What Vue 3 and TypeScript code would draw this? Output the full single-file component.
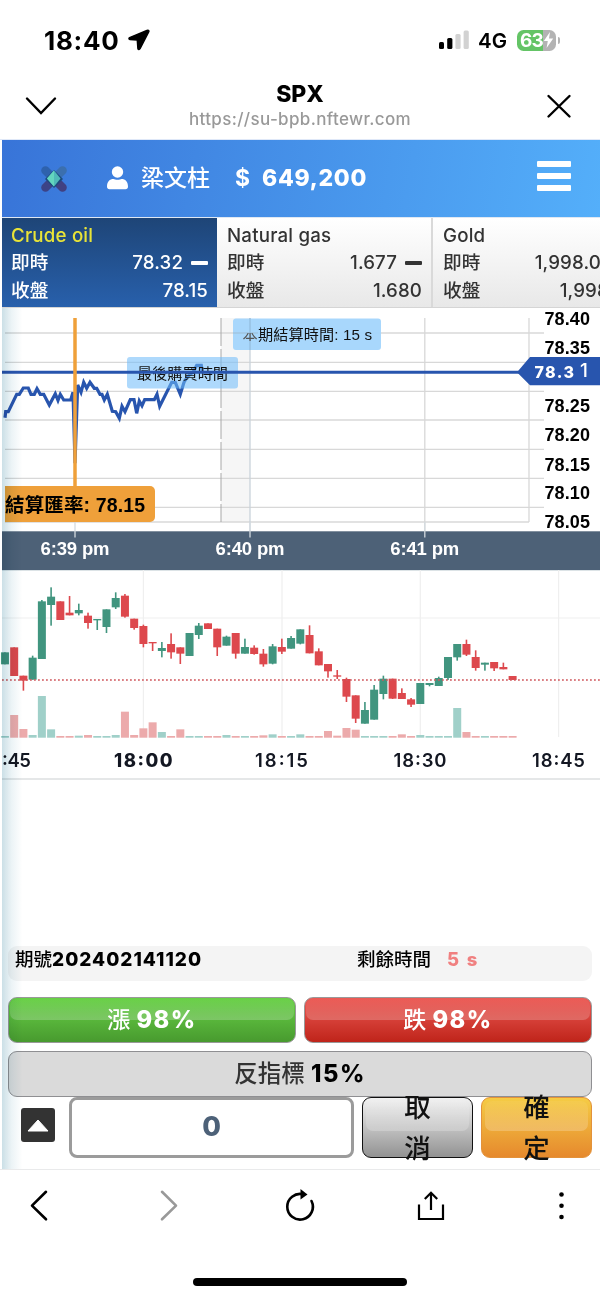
<script setup lang="ts">
type Candle = {
  x: number
  up: boolean
  top: number
  height: number
  high: number
  low: number
  volTop: number
}

// [direction, body top, body bottom, high, low, volume top], in thirds of a pixel from the pane's top
const raw: [string, number, number, number, number, number][] = [
  ['g', 247, 283, 247, 283, 498],
  ['r', 232, 318, 232, 318, 435],
  ['r', 317, 332, 317, 362, 477],
  ['g', 263, 329, 257, 329, 495],
  ['g', 94, 267, 90, 267, 378],
  ['g', 80, 105, 52, 167, 478],
  ['r', 94, 150, 94, 150, 498],
  ['r', 128, 136, 78, 136, 498],
  ['g', 120, 130, 101, 136, 497],
  ['r', 137, 159, 128, 176, 495],
  ['g', 147, 151, 147, 180, 498],
  ['g', 118, 171, 118, 189, 498],
  ['g', 84, 112, 67, 117, 495],
  ['r', 77, 140, 72, 143, 425],
  ['r', 146, 174, 146, 179, 495],
  ['r', 168, 222, 164, 232, 475],
  ['r', 216, 220, 216, 243, 457],
  ['g', 234, 243, 216, 262, 486],
  ['r', 222, 247, 190, 266, 498],
  ['r', 232, 251, 232, 282, 478],
  ['g', 189, 258, 189, 258, 498],
  ['g', 167, 195, 159, 207, 498],
  ['r', 160, 177, 160, 177, 498],
  ['r', 176, 232, 176, 258, 498],
  ['g', 200, 227, 197, 227, 495],
  ['r', 189, 251, 189, 266, 498],
  ['g', 231, 251, 206, 251, 498],
  ['r', 233, 252, 226, 254, 498],
  ['r', 251, 283, 237, 290, 496],
  ['g', 229, 281, 222, 283, 493],
  ['r', 231, 245, 206, 252, 498],
  ['g', 204, 236, 198, 236, 498],
  ['g', 178, 221, 178, 223, 493],
  ['r', 195, 250, 166, 250, 498],
  ['r', 244, 286, 235, 286, 498],
  ['r', 282, 304, 282, 323, 483],
  ['r', 316, 320, 300, 327, 497],
  ['r', 327, 380, 323, 396, 474],
  ['r', 376, 446, 376, 459, 479],
  ['g', 420, 461, 396, 461, 498],
  ['g', 359, 449, 345, 449, 498],
  ['g', 326, 372, 317, 388, 498],
  ['r', 326, 386, 326, 387, 498],
  ['r', 369, 387, 355, 387, 493],
  ['r', 388, 404, 384, 411, 498],
  ['g', 339, 402, 339, 402, 495],
  ['g', 339, 345, 339, 349, 498],
  ['g', 324, 348, 320, 348, 498],
  ['g', 261, 324, 261, 330, 498],
  ['g', 222, 262, 222, 272, 414],
  ['r', 222, 254, 209, 258, 486],
  ['r', 261, 294, 241, 302, 498],
  ['g', 278, 284, 278, 302, 498],
  ['r', 276, 295, 276, 303, 498],
  ['r', 291, 298, 278, 298, 498],
  ['r', 318, 330, 318, 330, 498],
]

const candles: Candle[] = raw.map(([dir, top, bottom, high, low, vol], i) => ({
  x: 143.4 + (i - 15) * 9.23,
  up: dir === 'g',
  top: top / 3,
  height: (bottom - top) / 3,
  high: high / 3,
  low: low / 3,
  volTop: vol / 3,
}))

const ticks: [number, number][] = [
  [15, 338], [17, 320], [25, 320], [50, 268], [58, 268], [70, 249], [85, 249], [93, 268], [103, 268],
  [111, 251], [121, 268], [131, 268], [148, 300], [166, 266], [174, 286], [181, 268], [191, 285],
  [212, 285], [219, 262], [225, 475], [233, 240], [243, 262], [251, 232], [260, 250], [270, 232],
  [283, 250], [290, 250], [300, 268], [306, 268], [313, 285], [322, 268], [337, 319], [347, 320],
  [358, 340], [366, 304], [375, 320], [391, 284], [402, 284], [410, 325], [418, 288], [426, 302],
  [434, 284], [463, 284], [471, 268], [479, 304], [515, 232], [526, 232], [541, 268], [552, 232],
  [562, 215], [580, 200], [590, 181], [604, 181], [607, 200],
]
const tickLine = ticks.map(([x, y]) => `${(x / 3).toFixed(1)},${(y / 3 - 3).toFixed(1)}`).join(' ')

const gridY = [25, 54.3, 83.3, 112, 141.3, 170.3, 199.3]
const priceLabels = [
  { text: '78.40', y: 16.7 },
  { text: '78.35', y: 45.8 },
  { text: '78.25', y: 104 },
  { text: '78.20', y: 133.2 },
  { text: '78.15', y: 162.5 },
  { text: '78.10', y: 191.3 },
  { text: '78.05', y: 220.3 },
]
const minuteLabels = [
  { text: '6:39 pm', x: 75 },
  { text: '6:40 pm', x: 250 },
  { text: '6:41 pm', x: 424.8 },
]
const hourLabels = [
  { text: ':45', x: 2, w: 29, bold: false },
  { text: '18:00', x: 114, w: 58.5, bold: true },
  { text: '18:15', x: 255, w: 53, bold: false },
  { text: '18:30', x: 393.5, w: 53, bold: false },
  { text: '18:45', x: 532, w: 53, bold: false },
]

const markets = [
  { name: 'Crude oil', now: '78.32', close: '78.15', active: true },
  { name: 'Natural gas', now: '1.677', close: '1.680', active: false },
  { name: 'Gold', now: '1,998.00', close: '1,998.00', active: false },
]
</script>

<template>
  <div class="screen">
    <div class="status">
      <div class="clock">18:40</div>
      <svg class="locate" width="22" height="22" viewBox="0 0 22 22">
        <path d="M19.5 1.3 1.6 8.6c-1 .5-.8 1.8.3 1.9l7.4.5.6 8.4c.1 1.2 1.5 1.5 2 .4L20.8 2.600c.4-.9-.4-1.700-1.300-1.300z" stroke="#000" stroke-width="1.500" stroke-linejoin="round" />
      </svg>
      <svg class="signal" width="32" height="20" viewBox="0 0 32 20">
        <rect x="0" y="12" width="5" height="7" rx="1.5" />
        <rect x="8.200" y="8" width="5.200" height="11" rx="1.5" />
        <rect x="16.400" y="4" width="5.200" height="15" rx="1.5" fill="#d2d2d2" />
        <rect x="24.600" y="0.500" width="5.200" height="18.500" rx="1.5" fill="#d2d2d2" />
      </svg>
      <div class="net">4G</div>
      <div class="battery">
        <span class="level">63</span>
        <svg width="11" height="18" viewBox="0 0 11 18"><path d="M7 1 .8 10h4L3.600 17 10.200 7.500H6z" fill="#fff" /></svg>
      </div>
      <div class="nub"></div>
    </div>

    <div class="browser">
      <svg width="32" height="20" viewBox="0 0 32 20"><path d="M2 2.500 16 17 30 2.500" fill="none" stroke="#000" stroke-width="2.400" stroke-linecap="round" /></svg>
      <div class="page">
        <div class="page-title">SPX</div>
        <div class="page-url">https://su-bpb.nftewr.com</div>
      </div>
      <svg width="26" height="26" viewBox="0 0 26 26"><path d="M2.500 3 23.500 23.500M23.500 3 2.500 23.500" fill="none" stroke="#000" stroke-width="2.400" stroke-linecap="round" /></svg>
    </div>

    <div class="topbar">
      <svg class="logo" width="28" height="28" viewBox="0 0 28 28">
        <g stroke-linecap="round" stroke-width="8.500">
          <path d="M5.500 5.500 14 14" stroke="#2e62ad" />
          <path d="M22.500 5.500 14 14" stroke="#3b6fae" />
          <path d="M5.500 22.500 14 14" stroke="#3c4387" />
          <path d="M22.500 22.500 14 14" stroke="#414081" />
        </g>
        <path d="M5 14 14 5 23 14 14 23z" fill="#1b4a7d" />
        <path d="M14 5.500 20.500 13.500 14 21.500 7 13.500z" fill="#4fb9b8" />
        <path d="M14 5.500V21.500L7 13.500z" fill="#63d5be" />
      </svg>
      <svg class="user" width="21" height="24" viewBox="0 0 21 24">
        <circle cx="10.500" cy="6" r="5.700" fill="#fff" />
        <path d="M0 20.500c0-5 2.700-7.500 6.500-7.500 1.500.9 6.500.9 8 0 3.800 0 6.500 2.500 6.500 7.500 0 1.800-1 2.700-2.500 2.700h-16C1 23.200 0 22.300 0 20.500z" fill="#fff" />
      </svg>
      <span class="name">梁文柱</span>
      <span class="dollar">$</span>
      <span class="balance">649,200</span>
      <div class="menu"><i></i><i></i><i></i></div>
    </div>

    <div class="markets">
      <div v-for="m in markets" :key="m.name" class="market" :class="{ active: m.active }">
        <div class="market-name">{{ m.name }}</div>
        <div class="row"><span class="cjk">即時</span><span class="val">{{ m.now }}<i class="dash"></i></span></div>
        <div class="row"><span class="cjk">收盤</span><span class="val">{{ m.close }}</span></div>
      </div>
    </div>

    <div class="body">
      <svg class="chart" width="600" height="262" viewBox="0 0 600 262">
        <rect x="221" y="10" width="29" height="204" fill="#f6f6f6" />
        <g stroke="#d8d8d8" stroke-width="1.300">
          <line v-for="y in gridY" :key="y" x1="5" x2="544" :y1="y" :y2="y" />
          <line x1="5" x2="529" y1="214" y2="214" />
          <line x1="529" x2="529" y1="10" y2="214" />
          <line x1="424.800" x2="424.800" y1="10" y2="224" />
          <line x1="250" x2="250" y1="10" y2="224" stroke="#c9d3da" />
        </g>
        <line x1="221" x2="221" y1="10" y2="214" stroke="#a8a8a8" stroke-dasharray="28 3" />
        <polyline :points="tickLine" fill="none" stroke="#2855ae" stroke-width="3.200" stroke-linejoin="miter" />
        <rect x="127" y="49" width="111" height="31.500" rx="3" fill="#6ebcfa" fill-opacity=".56" />
        <text x="137" y="70.500" class="tag" textLength="91">最後購買時間</text>
        <line x1="2" x2="520" y1="64.200" y2="64.200" stroke="#2855ae" stroke-width="3" />
        <rect x="233" y="10.500" width="148" height="31.500" rx="3" fill="#a3d5fc" fill-opacity=".95" />
        <line x1="233" x2="258" y1="25" y2="25" stroke="#9dbdd4" stroke-width="1" />
        <line x1="250" x2="250" y1="10" y2="42" stroke="#8fb6d6" stroke-width="1" />
        <svg x="242" y="25" width="16" height="8" viewBox="242 25 16 8"><text x="242.500" y="32" class="tag faint">本</text></svg>
        <text x="258" y="32" class="tag" textLength="114">期結算時間: 15 s</text>
        <line x1="75" x2="75" y1="10" y2="180" stroke="#efa03a" stroke-width="3.500" />
        <path d="M5 178H150a5 5 0 0 1 5 5V209a5 5 0 0 1-5 5H5z" fill="#efa03a" />
        <text x="5" y="204" class="settle" textLength="140">結算匯率: 78.15</text>
        <text v-for="p in priceLabels" :key="p.text" x="544.500" :y="p.y" class="price" textLength="45.500">{{ p.text }}</text>
        <path d="M517 64.200 530 49H600V77.300H530z" fill="#2855ae" />
        <text x="534.500" y="69.500" class="flag" textLength="39.500">78.3</text>
        <text x="580" y="69" class="flag-last">1</text>
        <rect x="2" y="223.300" width="598" height="38.700" fill="#4d6177" />
        <g stroke="#d4dbe0" stroke-width="1.300">
          <line x1="75" x2="75" y1="214" y2="229.500" />
          <line x1="250" x2="250" y1="214" y2="229.500" />
          <line x1="424.800" x2="424.800" y1="214" y2="229.500" />
        </g>
        <text v-for="t in minuteLabels" :key="t.text" :x="t.x - 34.500" y="247" class="minute" textLength="69">{{ t.text }}</text>
      </svg>

      <svg class="chart" width="600" height="210" viewBox="0 0 600 210">
        <g stroke="#efefef" stroke-width="1.200">
          <line x1="2" x2="600" y1="0.500" y2="0.500" stroke="#dce3e6" />
          <line x1="2" x2="600" y1="48" y2="48" />
          <line x1="143.400" x2="143.400" y1="0" y2="167" />
          <line x1="282" x2="282" y1="0" y2="167" />
          <line x1="420.300" x2="420.300" y1="0" y2="167" />
          <line x1="558.600" x2="558.600" y1="0" y2="167" />
        </g>
        <g v-for="c in candles" :key="c.x" :class="c.up ? 'up' : 'down'">
          <rect class="vol" :x="c.x - 4" :y="c.volTop" width="8" :height="167.700 - c.volTop" />
          <rect :x="c.x - 0.800" :y="c.high" width="1.600" :height="c.low - c.high" />
          <rect :x="c.x - 4" :y="c.top" width="8" :height="c.height" />
        </g>
        <line x1="2" x2="600" y1="110" y2="110" stroke="#d0575c" stroke-width="1.700" stroke-dasharray="1.800 2.200" />
        <text v-for="h in hourLabels" :key="h.text" :x="h.x" y="197.300" :textLength="h.w" class="hour" :class="{ bold: h.bold }">{{ h.text }}</text>
        <line x1="2" x2="600" y1="209" y2="209" stroke="#dcdfe1" stroke-width="1.500" />
      </svg>

      <div class="trade">
        <div class="period">
          <span class="issue">期號<b>202402141120</b></span>
          <span class="remain">剩餘時間</span>
          <b class="seconds">5 s</b>
        </div>
        <div class="bets">
          <div class="btn rise"><span>漲 <b>98%</b></span></div>
          <div class="btn fall"><span>跌 <b>98%</b></span></div>
        </div>
        <div class="inverse">反指標 <b>15%</b></div>
        <div class="entry">
          <div class="toggle"><svg width="22" height="13" viewBox="0 0 22 13"><path d="M11 1 21 12H1z" fill="#fff" stroke="#fff" stroke-linejoin="round" /></svg></div>
          <div class="amount">0</div>
          <div class="act cancel"><span>取<br />消</span></div>
          <div class="act confirm"><span>確<br />定</span></div>
        </div>
      </div>
      <div class="edge"></div>
    </div>

    <div class="toolbar">
      <svg width="600" height="60" viewBox="0 0 600 60" fill="none" stroke="#000" stroke-width="2.600">
        <path d="M46 21.800 32 35.600 46 49.300" stroke-linecap="round" stroke-linejoin="round" />
        <path d="M162 21.800 176 35.600 162 49.300" stroke="#999" stroke-linecap="round" stroke-linejoin="round" />
        <path d="M303 24.300A12.800 12.800 0 1 0 311.500 31" stroke-linecap="round" />
        <path d="M300.500 19 307.500 24.500 300.500 29.500z" fill="#000" stroke="none" />
        <path d="M419 34.500V49H443V34.500M431 40V23.500M424.800 29 431 22.700 437.200 29" stroke-width="2.200" />
        <g fill="#000" stroke="none"><circle cx="561.500" cy="24.500" r="2.300" /><circle cx="561.500" cy="35.700" r="2.300" /><circle cx="561.500" cy="47" r="2.300" /></g>
      </svg>
      <div class="home"></div>
    </div>
  </div>
</template>

<style>
body {
  margin: 0;
  background: #fff;
}
</style>

<style scoped>
.screen {
  width: 600px;
  height: 1298px;
  overflow: hidden;
  background: #fff;
  color: #000;
  font-family: Inter, 'Noto Sans CJK TC', sans-serif;
  display: flex;
  flex-direction: column;
}
.screen * {
  box-sizing: border-box;
}
svg {
  display: block;
  flex: none;
}
.status {
  height: 80px;
  flex: none;
  display: flex;
  align-items: center;
  padding-left: 44px;
}
.clock {
  width: 84px;
  font-size: 26px;
  font-weight: 700;
  letter-spacing: 0.700px;
}
.signal {
  margin-left: 289px;
}
.net {
  margin-left: 7px;
  width: 39px;
  font-size: 20.500px;
  font-weight: 600;
}
.battery {
  width: 39px;
  height: 21px;
  border-radius: 6.500px;
  background: linear-gradient(90deg, #64c466 66%, #b3b3b3 66%);
  display: flex;
  align-items: center;
  padding-left: 3px;
}
.level {
  width: 23px;
  color: #fff;
  font-size: 19px;
  font-weight: 700;
  letter-spacing: -0.8px;
}
.nub {
  width: 2px;
  height: 7px;
  margin-left: 1.500px;
  border-radius: 0 2px 2px 0;
  background: #b3b3b3;
}
.browser {
  height: 60px;
  flex: none;
  display: flex;
  align-items: center;
  justify-content: space-between;
  padding: 0 28px 8px 25px;
  border-bottom: 1px solid #dfe8f8;
}
.page {
  text-align: center;
  padding-right: 3px;
}
.page-title {
  font-size: 23px;
  font-weight: 800;
  line-height: 26px;
}
.page-url {
  font-size: 17px;
  font-weight: 500;
  line-height: 24px;
  color: #999;
  letter-spacing: 0.350px;
}
.topbar {
  height: 77px;
  flex: none;
  margin-left: 2px;
  display: flex;
  align-items: center;
  color: #fff;
  background: linear-gradient(100deg, #3874d8, #54affa);
}
.logo {
  margin-left: 38px;
}
.user {
  margin-left: 39px;
  margin-top: -2px;
}
.name {
  margin-left: 13px;
  margin-top: -6px;
  width: 94px;
  font-size: 23px;
  font-weight: 500;
}
.dollar {
  width: 27px;
  margin-top: -1px;
  font-size: 23px;
  font-weight: 700;
}
.balance {
  margin-top: -1px;
  font-size: 23px;
  font-weight: 800;
  letter-spacing: 0.700px;
}
.menu {
  margin-left: auto;
  margin-right: 29px;
  margin-top: -5px;
  display: flex;
  flex-direction: column;
  gap: 6px;
}
.menu i {
  display: block;
  width: 34px;
  height: 6px;
  border-radius: 1px;
  background: #fff;
}
.markets {
  height: 91px;
  flex: none;
  margin-left: 2px;
  border-top: 1px solid #dfe8f3;
  border-bottom: 1px solid #d5d5d5;
  overflow: hidden;
  display: flex;
}
.market {
  width: 216px;
  flex: none;
  padding: 4px 9px 0 10px;
  border-right: 2px solid #d9d9d9;
  background: linear-gradient(#fff, #e8e8e8);
  color: #333;
  font-size: 18.700px;
  font-weight: 500;
}
.market.active {
  width: 215px;
  padding-left: 9px;
  border-right: 0;
  background: linear-gradient(#1e4577, #2860ac);
  color: #fff;
}
.market-name {
  height: 27px;
  line-height: 28px;
  letter-spacing: 0.200px;
}
.active .market-name {
  color: #e8e337;
}
.row {
  height: 28px;
  line-height: 28px;
  display: flex;
  justify-content: space-between;
}
.val {
  letter-spacing: 0.100px;
  display: flex;
  align-items: center;
}
.dash {
  width: 17px;
  height: 4px;
  margin-left: 8px;
  border-radius: 1px;
  background: currentColor;
}
.body {
  height: 861px;
  flex: none;
  position: relative;
}
.edge {
  position: absolute;
  left: 2px;
  top: 0;
  width: 20px;
  height: 100%;
  mix-blend-mode: multiply;
  background: linear-gradient(90deg, rgba(160, 197, 210, 0.55), rgba(160, 197, 210, 0.22) 45%, rgba(160, 197, 210, 0));
}
.tag {
  font: 15.200px 'Liberation Sans', 'Noto Sans CJK TC', sans-serif;
  fill: #111;
}
.faint {
  fill: #555;
}
.settle {
  font: bold 19.500px 'Liberation Sans', 'Noto Sans CJK TC', sans-serif;
}
.price {
  font: bold 18px 'Liberation Sans', sans-serif;
}
.flag {
  font: 800 16px Inter, sans-serif;
  fill: #fff;
}
.flag-last {
  font: 500 19px Inter, sans-serif;
  fill: #fff;
}
.minute {
  font: bold 18.500px 'Liberation Sans', sans-serif;
  fill: #fff;
}
.up {
  fill: #41957f;
}
.down {
  fill: #dd484d;
}
.up .vol {
  fill: #a0d0c9;
}
.down .vol {
  fill: #ecaaab;
}
.hour {
  font: 600 18.500px Inter, sans-serif;
  fill: #131722;
}
.hour.bold {
  font-weight: 800;
}
.trade {
  padding: 166px 8px 0;
}
.period {
  height: 35px;
  border-radius: 9px;
  background: #f4f4f4;
  display: flex;
  align-items: flex-start;
  padding: 0 7px;
  font-size: 18.500px;
  line-height: 27px;
  font-weight: 500;
}
.issue {
  width: 342px;
}
.issue b {
  font-weight: 800;
  font-size: 19px;
  letter-spacing: 1px;
}
.remain {
  width: 90px;
}
.seconds {
  color: #f08080;
  font-weight: 800;
  font-size: 18.500px;
  letter-spacing: 1.800px;
}
.bets {
  margin-top: 16px;
  display: flex;
  gap: 8px;
}
.btn {
  position: relative;
  flex: 1;
  height: 46px;
  border: 1.500px solid #999;
  border-radius: 9px;
  color: #fff;
  font-size: 23px;
  font-weight: 500;
  line-height: 43px;
  text-align: center;
}
.btn span {
  position: relative;
}
.btn::before {
  content: '';
  position: absolute;
  left: 1px;
  right: 1px;
  top: 1px;
  height: 21px;
  border-radius: 7px;
  background: linear-gradient(rgba(255, 255, 255, 0.02), rgba(255, 255, 255, 0.22));
}
.btn b,
.inverse b {
  font-weight: 800;
  font-size: 23.700px;
  letter-spacing: 1.500px;
}
.rise {
  background: linear-gradient(#68d146, #489a2f);
}
.fall {
  background: linear-gradient(#ec5a55, #bf241a);
}
.inverse {
  margin-top: 8px;
  height: 46px;
  border: 1.500px solid #8f8f92;
  border-radius: 9px;
  background: #dadada;
  color: #333;
  font-size: 23.500px;
  font-weight: 500;
  line-height: 43px;
  text-align: center;
}
.inverse b {
  color: #000;
}
.entry {
  display: flex;
  align-items: center;
  height: 61px;
}
.toggle {
  margin-left: 13px;
  width: 34px;
  height: 34px;
  margin-top: -5px;
  border-radius: 3px;
  background: #333;
  display: flex;
  align-items: center;
  justify-content: center;
}
.amount {
  margin-left: 14px;
  width: 285px;
  height: 61px;
  border: 3px solid #9b9b9b;
  border-radius: 8px;
  color: #4d6178;
  font-size: 27px;
  font-weight: 800;
  line-height: 53px;
  text-align: center;
}
.act {
  position: relative;
  margin-left: 8px;
  width: 111px;
  height: 61px;
  border-radius: 9px;
  display: flex;
  align-items: center;
  justify-content: center;
  font-size: 26.500px;
  font-weight: 500;
  line-height: 41px;
  color: #111;
}
.act::before {
  content: '';
  position: absolute;
  left: 3px;
  right: 3px;
  top: 3px;
  height: 30px;
  border-radius: 7px;
  background: linear-gradient(rgba(255, 255, 255, 0.05), rgba(255, 255, 255, 0.22));
}
.act span {
  position: relative;
}
.cancel {
  border: 1.500px solid #111;
  background: linear-gradient(#f2f2f2, #929292);
}
.confirm {
  border: 1.500px solid #e3923a;
  background: linear-gradient(#f5cc45, #e6892d);
}
.toolbar {
  height: 129px;
  flex: none;
  border-top: 1.500px solid #e9eaeb;
  display: flex;
  flex-direction: column;
  align-items: center;
}
.home {
  margin-top: 48px;
  width: 214px;
  height: 8px;
  border-radius: 4px;
  background: #000;
}
</style>
